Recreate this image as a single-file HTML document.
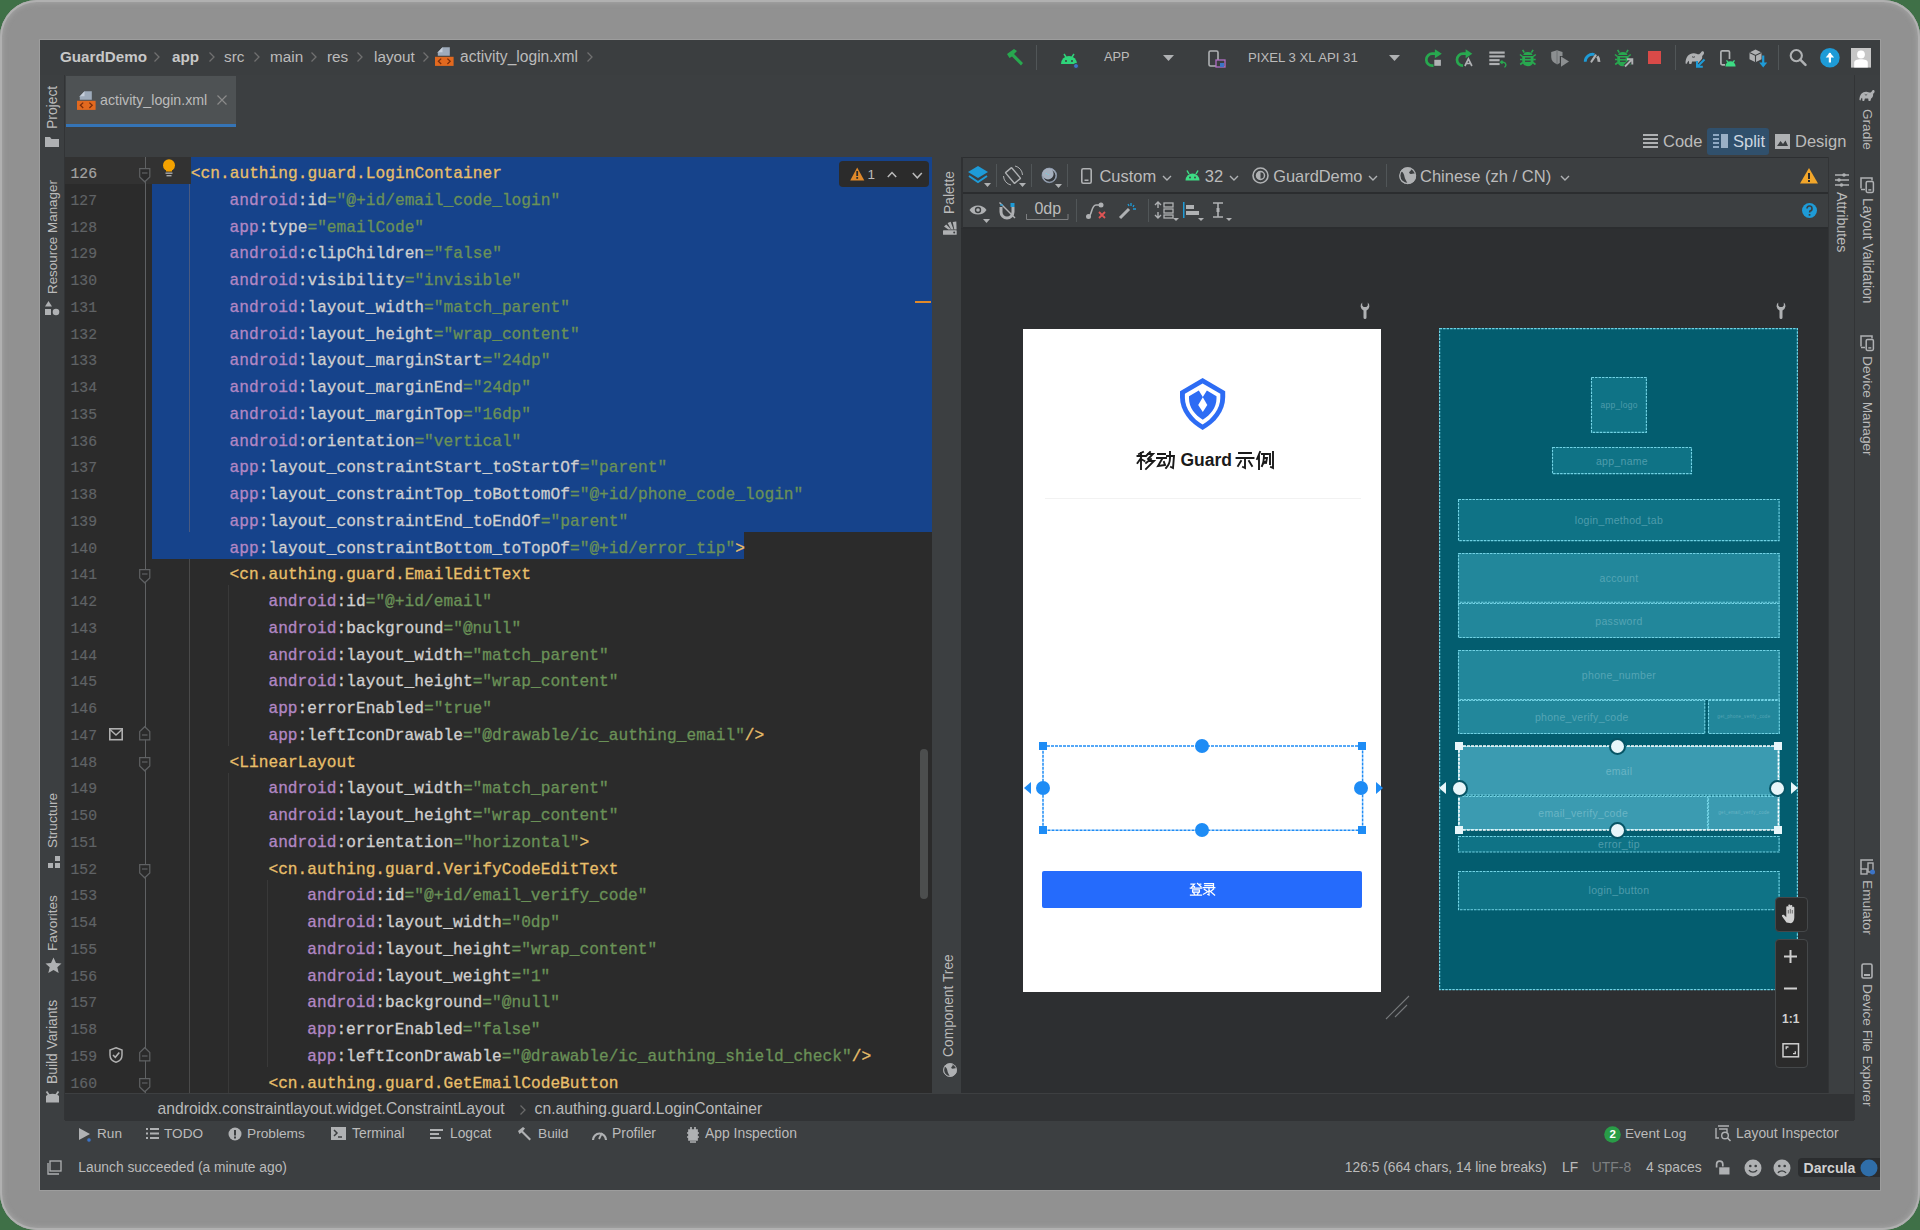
<!DOCTYPE html>
<html><head><meta charset="utf-8"><style>
*{margin:0;padding:0;box-sizing:border-box}
html,body{width:1920px;height:1230px;overflow:hidden;background:#3f7047}
body{position:relative;font-family:"Liberation Sans",sans-serif}
.a{position:absolute}
#frame{position:absolute;left:0;top:0;width:1920px;height:1230px;border-radius:37px;background:#919191;box-shadow:inset 0 0 0 2px #b0b0b0,inset 0 0 5px 3px #a3a3a3}
.ui{position:absolute;color:#bbbbbb;font-size:15px;white-space:nowrap;line-height:1}
.code{position:absolute;font-family:"Liberation Mono",monospace;font-size:16.17px;white-space:pre;color:#a9b7c6;line-height:26.75px;height:26.75px;-webkit-text-stroke:0.3px currentColor;padding-top:3.7px;letter-spacing:0.028px}
.ln{position:absolute;font-family:"Liberation Mono",monospace;font-size:14.7px;color:#606366;text-align:right;line-height:26.75px;height:26.75px;padding-top:3.7px;-webkit-text-stroke:0.2px currentColor}
.t{color:#e8bf6a}.ns{color:#b287c4}.an{color:#cfcfcf}.v{color:#6a9157}
.rl{position:absolute;transform-origin:0 0;white-space:nowrap;color:#bbbbbb;font-size:14px;line-height:1}
svg{position:absolute;overflow:visible}
</style></head><body>
<div id="frame"></div>
<div class="a" style="left:39px;top:39px;width:1842px;height:1152px;background:#9d9d9d;"></div>
<div class="a" style="left:40px;top:40px;width:1840px;height:1150px;background:#3c3f41;"></div>
<div class="a" style="left:40px;top:40px;width:1840px;height:35px;background:#3b3e40;"></div>
<div class="ui" style="left:60px;top:49.47px;font-size:15.2px;color:#c8c8c8;font-weight:bold;">GuardDemo</div>
<svg style="left:153px;top:51px;" width="8" height="12" viewBox="0 0 8 12"><path d="M1.5 1.5 L6 6 L1.5 10.5" fill="none" stroke="#707070" stroke-width="1.3"/></svg>
<div class="ui" style="left:172px;top:49.47px;font-size:15.2px;color:#c8c8c8;font-weight:bold;">app</div>
<svg style="left:208px;top:51px;" width="8" height="12" viewBox="0 0 8 12"><path d="M1.5 1.5 L6 6 L1.5 10.5" fill="none" stroke="#707070" stroke-width="1.3"/></svg>
<div class="ui" style="left:224px;top:49.42px;font-size:15.3px;color:#bbbbbb;font-weight:normal;">src</div>
<svg style="left:253px;top:51px;" width="8" height="12" viewBox="0 0 8 12"><path d="M1.5 1.5 L6 6 L1.5 10.5" fill="none" stroke="#707070" stroke-width="1.3"/></svg>
<div class="ui" style="left:270px;top:49.42px;font-size:15.3px;color:#bbbbbb;font-weight:normal;">main</div>
<svg style="left:310px;top:51px;" width="8" height="12" viewBox="0 0 8 12"><path d="M1.5 1.5 L6 6 L1.5 10.5" fill="none" stroke="#707070" stroke-width="1.3"/></svg>
<div class="ui" style="left:327px;top:49.42px;font-size:15.3px;color:#bbbbbb;font-weight:normal;">res</div>
<svg style="left:356px;top:51px;" width="8" height="12" viewBox="0 0 8 12"><path d="M1.5 1.5 L6 6 L1.5 10.5" fill="none" stroke="#707070" stroke-width="1.3"/></svg>
<div class="ui" style="left:374px;top:49.42px;font-size:15.3px;color:#bbbbbb;font-weight:normal;">layout</div>
<svg style="left:422px;top:51px;" width="8" height="12" viewBox="0 0 8 12"><path d="M1.5 1.5 L6 6 L1.5 10.5" fill="none" stroke="#707070" stroke-width="1.3"/></svg>
<svg style="left:435.3px;top:46.5px;" width="20" height="20" viewBox="0 0 20 20"><path d="M7.5 0.3 L14.8 0.3 L14.8 8.7 L2.8 8.7 L2.8 5.2 Z" fill="#9eabbb"/><path d="M2.8 5.2 L7.5 5.2 L7.5 0.3 Z" fill="#c5ceda"/><rect x="0" y="9.8" width="18.6" height="9.1" fill="#e2691f"/><path d="M6.2 11.6 L3.4 14.3 L6.2 17 M12.4 11.6 L15.2 14.3 L12.4 17" fill="none" stroke="#7a2e0c" stroke-width="1.3"/></svg>
<div class="ui" style="left:460px;top:49.27px;font-size:15.6px;color:#bbbbbb;font-weight:normal;">activity_login.xml</div>
<svg style="left:586px;top:51px;" width="8" height="12" viewBox="0 0 8 12"><path d="M1.5 1.5 L6 6 L1.5 10.5" fill="none" stroke="#707070" stroke-width="1.3"/></svg>
<svg style="left:1005px;top:48px;" width="20" height="20" viewBox="0 0 20 20"><path d="M2 6 L9 1 L12 3 L9 6 L18 15 L16 17.5 L7 8.5 L4.5 10 Z" fill="#28a84f"/></svg>
<div class="a" style="left:1036px;top:45px;width:1px;height:25px;background:#515658;"></div>
<svg style="left:1060px;top:50px;" width="20" height="20" viewBox="0 0 20 20"><path d="M1 14 A8 8 0 0 1 17 14 Z" fill="#2ed47a"/><path d="M4 4 L6 7 M14 4 L12 7" stroke="#2ed47a" stroke-width="1.5"/><circle cx="6" cy="11" r="1" fill="#3c3f41"/><circle cx="12" cy="11" r="1" fill="#3c3f41"/><circle cx="16" cy="16" r="2.5" fill="#3c74c7" stroke="#3b3e40" stroke-width="1"/></svg>
<div class="ui" style="left:1104px;top:51.27px;font-size:12.8px;color:#bbbbbb;font-weight:normal;">APP</div>
<svg style="left:1163px;top:55px;" width="12" height="7" viewBox="0 0 12 7"><path d="M0 0 L11 0 L5.5 6 Z" fill="#afb1b3"/></svg>
<svg style="left:1208px;top:50px;" width="18" height="18" viewBox="0 0 18 18"><rect x="1" y="1" width="9" height="15" rx="1.5" fill="none" stroke="#afb1b3" stroke-width="1.6"/><rect x="8" y="10" width="9" height="7" fill="#3b3e40" stroke="#b26ec6" stroke-width="1.3"/><rect x="12" y="13" width="4" height="4" fill="#3c74c7"/></svg>
<div class="ui" style="left:1248px;top:51.07px;font-size:13.2px;color:#bbbbbb;font-weight:normal;">PIXEL 3 XL API 31</div>
<svg style="left:1389px;top:55px;" width="12" height="7" viewBox="0 0 12 7"><path d="M0 0 L11 0 L5.5 6 Z" fill="#afb1b3"/></svg>
<svg style="left:1425px;top:48px;" width="20" height="20" viewBox="0 0 20 20"><path d="M10.5 5.7 L7.3 5.7 A6 6 0 0 0 7.3 17.7 L8.5 17.7" fill="none" stroke="#28a84f" stroke-width="2.7"/><path d="M9.9 1.2 L16.8 5.7 L9.9 10.3 Z" fill="#28a84f"/><rect x="9.3" y="11.8" width="6.6" height="6" fill="#afb1b3"/></svg>
<svg style="left:1456px;top:48px;" width="20" height="20" viewBox="0 0 20 20"><path d="M10.5 5.7 L7 5.7 A6 6 0 0 0 7 17.7" fill="none" stroke="#28a84f" stroke-width="2.7"/><path d="M9.6 1.2 L16.3 5.7 L9.6 10.3 Z" fill="#28a84f"/><path d="M8.9 18 L12.4 10.9 L15.9 18 M10.3 15.5 L14.5 15.5" fill="none" stroke="#afb1b3" stroke-width="1.7"/></svg>
<svg style="left:1488.5px;top:50.5px;" width="19" height="16" viewBox="0 0 19 16"><rect x="0.3" y="0.5" width="15.4" height="2.2" fill="#afb1b3"/><rect x="0.3" y="4.3" width="15.4" height="2.2" fill="#afb1b3"/><rect x="0.3" y="8.1" width="10.3" height="2.2" fill="#afb1b3"/><rect x="0.3" y="11.9" width="10.3" height="2.2" fill="#afb1b3"/><path d="M13.5 9.6 L11.6 11.2 L13.5 12.8 M11.8 11.2 L14.5 11.2 A2.8 2.8 0 0 1 15.5 16.4" fill="none" stroke="#28a84f" stroke-width="1.4"/></svg>
<svg style="left:1520.3px;top:49.2px;" width="16" height="17" viewBox="0 0 16 17"><path d="M4.3 3.6 L2.6 0.8 M11.4 3.6 L13.1 0.8" stroke="#28a84f" stroke-width="1.6"/><path d="M3.2 6 A4.7 3.5 0 0 1 12.5 6 Z" fill="#28a84f"/><path d="M2.2 7 L13.5 7 L13.5 12 A5.65 5.2 0 0 1 2.2 12 Z" fill="#28a84f"/><path d="M0 5.5 L2.5 7.5 M15.7 5.5 L13.2 7.5 M0 10.5 L2.5 10.5 M15.7 10.5 L13.2 10.5 M0.2 15.5 L2.8 13.5 M15.5 15.5 L12.9 13.5" stroke="#28a84f" stroke-width="1.6"/><rect x="5" y="8.6" width="5.7" height="1.3" fill="#3b3e40"/><rect x="5" y="11.6" width="5.7" height="1.3" fill="#3b3e40"/></svg>
<svg style="left:1551px;top:50px;" width="19" height="17" viewBox="0 0 19 17"><path d="M0.2 2 L6 0.3 L11.5 2 L11.5 6 L8.8 6 L8.8 13 C7.5 13.8 6.5 14.2 6 14.3 C2.5 13 0.2 10.5 0.2 7 Z" fill="#8c8f91"/><path d="M6 0.3 L6 14.3" stroke="#6f7274" stroke-width="1"/><path d="M10 6.5 L18 11.5 L10 16.8 Z" fill="#8c8f91"/></svg>
<svg style="left:1582.5px;top:51px;" width="18" height="12" viewBox="0 0 18 12"><path d="M2.2 10.8 A7.5 7.5 0 0 1 11.5 3.5" fill="none" stroke="#1e9bd7" stroke-width="2.8"/><path d="M14.3 5.4 A7.5 7.5 0 0 1 16 10.8" fill="none" stroke="#afb1b3" stroke-width="2.8"/><path d="M8.5 10.5 L12.6 4.3" stroke="#afb1b3" stroke-width="2.2" stroke-linecap="round"/></svg>
<svg style="left:1615.3px;top:49.2px;" width="19" height="18" viewBox="0 0 19 18"><path d="M4.3 3.6 L2.6 0.8 M11.4 3.6 L13.1 0.8" stroke="#28a84f" stroke-width="1.6"/><path d="M3.2 6 A4.7 3.5 0 0 1 12.5 6 Z" fill="#28a84f"/><path d="M2.2 7 L13.5 7 L13.5 12 A5.65 5.2 0 0 1 2.2 12 Z" fill="#28a84f"/><path d="M0 5.5 L2.5 7.5 M15.7 5.5 L13.2 7.5 M0 10.5 L2.5 10.5 M15.7 10.5 L13.2 10.5 M0.2 15.5 L2.8 13.5 M15.5 15.5 L12.9 13.5" stroke="#28a84f" stroke-width="1.6"/><rect x="5" y="8.6" width="5.7" height="1.3" fill="#3b3e40"/><rect x="5" y="11.6" width="5.7" height="1.3" fill="#3b3e40"/><path d="M10 17.5 L16.8 10.7" stroke="#3b3e40" stroke-width="4"/><path d="M10 17.5 L16.8 10.7 M12 10.3 L17.3 10.3 L17.3 15.6" fill="none" stroke="#afb1b3" stroke-width="1.9"/></svg>
<div class="a" style="left:1648px;top:51px;width:13px;height:12.5px;background:#d94a48;"></div>
<div class="a" style="left:1674.5px;top:45px;width:1.0px;height:25px;background:#515658;"></div>
<svg style="left:1684.5px;top:50px;" width="21" height="18" viewBox="0 0 21 18"><path d="M0.5 13.5 C0.5 6.5 4.5 3 9 3.3 C11 3.5 12.5 4.5 14.2 4.3 L15.8 2.8 C16.3 1 18.5 0.5 19 2.5 C19.3 4 18 5.3 17.2 6 C17.5 8.5 16.5 10.5 14.8 11.5 L13.8 14 L11.7 14 L11.2 11.5 L7.2 11.5 L6.3 14 L4.3 14 L3.8 10.8 C3 11.2 2.2 12.4 2 13.8 Z" fill="#afb1b3"/><path d="M7 6.5 C8 7.5 9 7.5 10 6.5" stroke="#3b3e40" stroke-width="1" fill="none"/><path d="M19.5 9.5 L12.8 16.2" stroke="#3b3e40" stroke-width="4"/><path d="M19.5 9.5 L12.8 16.2 M12 11 L12 16.8 L17.8 16.8" fill="none" stroke="#1e9bd7" stroke-width="2"/></svg>
<svg style="left:1719.5px;top:49.5px;" width="17" height="17" viewBox="0 0 17 17"><path d="M9.5 9 L9.5 2 A1.3 1.3 0 0 0 8.2 0.8 L2.2 0.8 A1.3 1.3 0 0 0 0.9 2 L0.9 13.6 A1.3 1.3 0 0 0 2.2 14.9 L5 14.9" fill="none" stroke="#afb1b3" stroke-width="1.7"/><path d="M5.4 16.4 A5 5 0 0 1 15.6 16.4 Z" fill="#3ddc84"/><path d="M6.5 10.3 L8 12.3 M14.5 10.3 L13 12.3" stroke="#3ddc84" stroke-width="1.3"/></svg>
<svg style="left:1748.5px;top:48.5px;" width="20" height="20" viewBox="0 0 20 20"><path d="M0.5 3.5 L6.5 0.5 L12.5 3.5 L12.5 10.2 L6.5 13.2 L0.5 10.2 Z" fill="#afb1b3"/><path d="M0.5 3.5 L6.5 6.5 L12.5 3.5 M6.5 6.5 L6.5 13.2" stroke="#3b3e40" stroke-width="1.1" fill="none"/><path d="M14.2 6.5 L14.2 17" stroke="#1e9bd7" stroke-width="2.2"/><path d="M10.2 13.5 L14.2 18.5 L18.2 13.5 Z" fill="#1e9bd7"/></svg>
<div class="a" style="left:1778px;top:45px;width:1px;height:25px;background:#515658;"></div>
<svg style="left:1789px;top:48px;" width="19" height="19" viewBox="0 0 19 19"><circle cx="7.3" cy="7.6" r="5.6" fill="none" stroke="#afb1b3" stroke-width="2.1"/><path d="M11.3 11.6 L16.5 16.8" stroke="#afb1b3" stroke-width="2.5" stroke-linecap="round"/></svg>
<svg style="left:1820px;top:47.5px;" width="20" height="20" viewBox="0 0 20 20"><circle cx="9.9" cy="9.8" r="9.8" fill="#1e9bd7"/><path d="M9.9 5 L9.9 14.5" stroke="#fff" stroke-width="2.2"/><path d="M5.7 9.6 L9.9 4.6 L14.1 9.6 Z" fill="#fff"/></svg>
<svg style="left:1851.2px;top:47.5px;" width="20" height="20" viewBox="0 0 20 20"><rect x="0" y="0" width="20" height="19.6" fill="#c6c6c6"/><circle cx="10" cy="6.5" r="3.9" fill="#fff"/><path d="M3.2 19.6 L3.2 14.8 C3.2 12 6 11.2 10 11.2 C14 11.2 16.8 12 16.8 14.8 L16.8 19.6 Z" fill="#fff"/></svg>
<div class="a" style="left:40px;top:75px;width:25px;height:1045px;background:#3c3f41;"></div>
<div class="a" style="left:64px;top:75px;width:1px;height:1045px;background:#323436;"></div>
<div class="rl" style="left:45.82px;top:128.5px;font-size:13.9px;color:#bbbbbb;transform:rotate(-90deg)">Project</div>
<svg style="left:45px;top:136px;" width="15" height="12" viewBox="0 0 15 12"><path d="M0 1 L5 1 L6.5 3 L14 3 L14 11 L0 11 Z" fill="#afb1b3"/></svg>
<div class="rl" style="left:46.07px;top:293.5px;font-size:13.4px;color:#bbbbbb;transform:rotate(-90deg)">Resource Manager</div>
<svg style="left:45px;top:300px;" width="15" height="16" viewBox="0 0 15 16"><path d="M3.5 1 L7 6.5 L0 6.5 Z" fill="#afb1b3"/><rect x="0" y="9" width="6" height="6" fill="#afb1b3"/><circle cx="11" cy="12" r="3.3" fill="#afb1b3"/></svg>
<div class="rl" style="left:45.97px;top:848.4px;font-size:13.6px;color:#bbbbbb;transform:rotate(-90deg)">Structure</div>
<svg style="left:47.5px;top:856px;" width="13" height="13" viewBox="0 0 13 13"><rect x="0" y="7" width="5" height="5" fill="#afb1b3"/><rect x="7" y="7" width="5" height="5" fill="#afb1b3"/><rect x="7" y="0" width="5" height="5" fill="#afb1b3"/></svg>
<div class="rl" style="left:45.97px;top:951px;font-size:13.6px;color:#bbbbbb;transform:rotate(-90deg)">Favorites</div>
<svg style="left:44.5px;top:957px;" width="17" height="17" viewBox="0 0 17 17"><path d="M8.5 0.5 L11 6 L16.5 6.5 L12.3 10.3 L13.7 16 L8.5 13 L3.3 16 L4.7 10.3 L0.5 6.5 L6 6 Z" fill="#afb1b3"/></svg>
<div class="rl" style="left:45.87px;top:1084.4px;font-size:13.8px;color:#bbbbbb;transform:rotate(-90deg)">Build Variants</div>
<svg style="left:45px;top:1091px;" width="15" height="12" viewBox="0 0 15 12"><path d="M1 11.5 L14 11.5 L14 5 C11 2 4 2 1 5 Z" fill="#afb1b3"/><path d="M1.5 0.5 L4 4 M13.5 0.5 L11 4" stroke="#afb1b3" stroke-width="1.8"/></svg>
<div class="a" style="left:1854px;top:75px;width:26px;height:1045px;background:#3c3f41;"></div>
<div class="a" style="left:1854px;top:75px;width:1px;height:1045px;background:#323436;"></div>
<svg style="left:1858.8px;top:88.8px;" width="17" height="13" viewBox="0 0 17 13"><g transform="scale(0.82)"><path d="M0.5 13.5 C0.5 6.5 4.5 3 9 3.3 C11 3.5 12.5 4.5 14.2 4.3 L15.8 2.8 C16.3 1 18.5 0.5 19 2.5 C19.3 4 18 5.3 17.2 6 C17.5 8.5 16.5 10.5 14.8 11.5 L13.8 14.6 L11.7 14.6 L11.2 11.5 L7.2 11.5 L6.3 14.6 L4.3 14.6 L3.8 10.8 C3 11.2 2.2 12.4 2 14 Z" fill="#afb1b3"/><path d="M7 6.5 C8 7.5 9 7.5 10 6.5" stroke="#3c3f41" stroke-width="1" fill="none"/></g></svg>
<div class="rl" style="left:1874.13px;top:109px;font-size:13.6px;color:#bbbbbb;transform:rotate(90deg)">Gradle</div>
<svg style="left:1860.3px;top:176.6px;" width="15" height="17" viewBox="0 0 15 17"><path d="M1 11.5 L1 1 L12 1 L12 3.5" fill="none" stroke="#afb1b3" stroke-width="1.5"/><path d="M1 12.5 L5 12.5" stroke="#afb1b3" stroke-width="1.5"/><rect x="6.2" y="4.4" width="7.2" height="11" rx="1.3" fill="#3c3f41" stroke="#afb1b3" stroke-width="1.5"/><rect x="8.3" y="12.2" width="3" height="1.4" fill="#afb1b3"/></svg>
<div class="rl" style="left:1874.28px;top:197.8px;font-size:13.9px;color:#bbbbbb;transform:rotate(90deg)">Layout Validation</div>
<svg style="left:1860.3px;top:335px;" width="15" height="17" viewBox="0 0 15 17"><path d="M1 11.5 L1 1 L12 1 L12 3.5" fill="none" stroke="#afb1b3" stroke-width="1.5"/><path d="M1 12.5 L5 12.5" stroke="#afb1b3" stroke-width="1.5"/><rect x="6.2" y="4.4" width="7.2" height="11" rx="1.3" fill="#3c3f41" stroke="#afb1b3" stroke-width="1.5"/><rect x="8.3" y="12.2" width="3" height="1.4" fill="#afb1b3"/></svg>
<div class="rl" style="left:1874.18px;top:356px;font-size:13.7px;color:#bbbbbb;transform:rotate(90deg)">Device Manager</div>
<svg style="left:1860px;top:859px;" width="16" height="17" viewBox="0 0 16 17"><path d="M1 10 L1 1 L13 1" fill="none" stroke="#afb1b3" stroke-width="1.5"/><rect x="1" y="10" width="6" height="5" fill="none" stroke="#afb1b3" stroke-width="1.4"/><rect x="8" y="4" width="5" height="9" fill="none" stroke="#afb1b3" stroke-width="1.4"/><circle cx="12.5" cy="13" r="2.5" fill="#3c74c7"/></svg>
<div class="rl" style="left:1874.18px;top:880px;font-size:13.7px;color:#bbbbbb;transform:rotate(90deg)">Emulator</div>
<svg style="left:1861px;top:963px;" width="13" height="16" viewBox="0 0 13 16"><rect x="1" y="1" width="10" height="14" rx="1.5" fill="none" stroke="#afb1b3" stroke-width="1.6"/><rect x="3" y="11" width="6" height="2" fill="#afb1b3"/></svg>
<div class="rl" style="left:1874.18px;top:984px;font-size:13.7px;color:#bbbbbb;transform:rotate(90deg)">Device File Explorer</div>
<div class="a" style="left:65px;top:75px;width:1789px;height:82px;background:#3c3f41;"></div>
<div class="a" style="left:66px;top:75.7px;width:170px;height:48.3px;background:#4e5254;"></div>
<div class="a" style="left:66px;top:123.9px;width:170px;height:3.0999999999999943px;background:#3574b6;"></div>
<svg style="left:76.6px;top:91px;" width="20" height="20" viewBox="0 0 20 20"><path d="M7.5 0.3 L14.8 0.3 L14.8 8.7 L2.8 8.7 L2.8 5.2 Z" fill="#9eabbb"/><path d="M2.8 5.2 L7.5 5.2 L7.5 0.3 Z" fill="#c5ceda"/><rect x="0" y="9.8" width="18.6" height="9.1" fill="#e2691f"/><path d="M6.2 11.6 L3.4 14.3 L6.2 17 M12.4 11.6 L15.2 14.3 L12.4 17" fill="none" stroke="#7a2e0c" stroke-width="1.3"/></svg>
<div class="ui" style="left:100px;top:93.27px;font-size:14.2px;color:#bbbbbb;font-weight:normal;">activity_login.xml</div>
<svg style="left:217px;top:95px;" width="10" height="10" viewBox="0 0 10 10"><path d="M0.5 0.5 L9.5 9.5 M9.5 0.5 L0.5 9.5" stroke="#8a8a8a" stroke-width="1.2"/></svg>
<svg style="left:1643px;top:134px;" width="15" height="14" viewBox="0 0 15 14"><rect x="0" y="0" width="15" height="2" fill="#afb1b3"/><rect x="0" y="4" width="15" height="2" fill="#afb1b3"/><rect x="0" y="8" width="15" height="2" fill="#afb1b3"/><rect x="0" y="12" width="15" height="2" fill="#afb1b3"/></svg>
<div class="ui" style="left:1663px;top:133.42px;font-size:16.5px;color:#bbbbbb;font-weight:normal;">Code</div>
<div class="a" style="left:1707px;top:128px;width:62px;height:27px;background:#30506c;border-radius:3px"></div>
<svg style="left:1713px;top:134px;" width="15" height="14" viewBox="0 0 15 14"><rect x="0" y="0" width="6" height="2" fill="#8fa9c3"/><rect x="0" y="4" width="6" height="2" fill="#8fa9c3"/><rect x="0" y="8" width="6" height="2" fill="#8fa9c3"/><rect x="0" y="12" width="6" height="2" fill="#8fa9c3"/><rect x="8" y="0" width="7" height="14" fill="#9ab0c6"/></svg>
<div class="ui" style="left:1733px;top:133.42px;font-size:16.5px;color:#cdd7e0;font-weight:normal;">Split</div>
<svg style="left:1775px;top:134px;" width="15" height="15" viewBox="0 0 15 15"><rect x="0" y="0" width="15" height="15" fill="#afb1b3"/><path d="M2 12 L5.5 7 L8 10 L10.5 6.5 L13 12 Z" fill="#3c3f41"/></svg>
<div class="ui" style="left:1795px;top:133.42px;font-size:16.5px;color:#bbbbbb;font-weight:normal;">Design</div>
<div class="a" style="left:65px;top:157px;width:867px;height:936.2px;background:#2b2b2b;"></div>
<div class="a" style="left:65px;top:157px;width:867px;height:1px;background:#323232;"></div>
<div class="a" style="left:65px;top:157.4px;width:126.5px;height:26.75px;background:#323232;"></div>
<div class="a" style="left:190.808px;top:157.4px;width:741.192px;height:26.75px;background:#16438b;"></div>
<div class="a" style="left:152px;top:184.15px;width:780px;height:347.75px;background:#16438b;"></div>
<div class="a" style="left:152px;top:531.9px;width:591.822px;height:26.75px;background:#16438b;"></div>
<div class="a" style="left:189px;top:184.15px;width:1px;height:347.75px;background:#4a5a80;"></div>
<div class="a" style="left:189px;top:558.65px;width:1px;height:534.5500000000001px;background:#4a4a4a;"></div>
<div class="a" style="left:228px;top:585.4px;width:1px;height:160.5px;background:#393939;"></div>
<div class="a" style="left:228px;top:772.65px;width:1px;height:320.55000000000007px;background:#393939;"></div>
<div class="a" style="left:267px;top:879.65px;width:1px;height:187.2500000000001px;background:#393939;"></div>
<div class="ln" style="left:56px;top:157.40px;width:41px;color:#a4a3a3">126</div>
<div class="code" style="left:190.81px;top:157.40px"><span class="t">&lt;cn.authing.guard.LoginContainer</span></div>
<div class="ln" style="left:56px;top:184.15px;width:41px;color:#606366">127</div>
<div class="code" style="left:229.62px;top:184.15px"><span class="ns">android</span><span class="an">:id</span><span class="v">=&quot;@+id/email_code_login&quot;</span></div>
<div class="ln" style="left:56px;top:210.90px;width:41px;color:#606366">128</div>
<div class="code" style="left:229.62px;top:210.90px"><span class="ns">app</span><span class="an">:type</span><span class="v">=&quot;emailCode&quot;</span></div>
<div class="ln" style="left:56px;top:237.65px;width:41px;color:#606366">129</div>
<div class="code" style="left:229.62px;top:237.65px"><span class="ns">android</span><span class="an">:clipChildren</span><span class="v">=&quot;false&quot;</span></div>
<div class="ln" style="left:56px;top:264.40px;width:41px;color:#606366">130</div>
<div class="code" style="left:229.62px;top:264.40px"><span class="ns">android</span><span class="an">:visibility</span><span class="v">=&quot;invisible&quot;</span></div>
<div class="ln" style="left:56px;top:291.15px;width:41px;color:#606366">131</div>
<div class="code" style="left:229.62px;top:291.15px"><span class="ns">android</span><span class="an">:layout_width</span><span class="v">=&quot;match_parent&quot;</span></div>
<div class="ln" style="left:56px;top:317.90px;width:41px;color:#606366">132</div>
<div class="code" style="left:229.62px;top:317.90px"><span class="ns">android</span><span class="an">:layout_height</span><span class="v">=&quot;wrap_content&quot;</span></div>
<div class="ln" style="left:56px;top:344.65px;width:41px;color:#606366">133</div>
<div class="code" style="left:229.62px;top:344.65px"><span class="ns">android</span><span class="an">:layout_marginStart</span><span class="v">=&quot;24dp&quot;</span></div>
<div class="ln" style="left:56px;top:371.40px;width:41px;color:#606366">134</div>
<div class="code" style="left:229.62px;top:371.40px"><span class="ns">android</span><span class="an">:layout_marginEnd</span><span class="v">=&quot;24dp&quot;</span></div>
<div class="ln" style="left:56px;top:398.15px;width:41px;color:#606366">135</div>
<div class="code" style="left:229.62px;top:398.15px"><span class="ns">android</span><span class="an">:layout_marginTop</span><span class="v">=&quot;16dp&quot;</span></div>
<div class="ln" style="left:56px;top:424.90px;width:41px;color:#606366">136</div>
<div class="code" style="left:229.62px;top:424.90px"><span class="ns">android</span><span class="an">:orientation</span><span class="v">=&quot;vertical&quot;</span></div>
<div class="ln" style="left:56px;top:451.65px;width:41px;color:#606366">137</div>
<div class="code" style="left:229.62px;top:451.65px"><span class="ns">app</span><span class="an">:layout_constraintStart_toStartOf</span><span class="v">=&quot;parent&quot;</span></div>
<div class="ln" style="left:56px;top:478.40px;width:41px;color:#606366">138</div>
<div class="code" style="left:229.62px;top:478.40px"><span class="ns">app</span><span class="an">:layout_constraintTop_toBottomOf</span><span class="v">=&quot;@+id/phone_code_login&quot;</span></div>
<div class="ln" style="left:56px;top:505.15px;width:41px;color:#606366">139</div>
<div class="code" style="left:229.62px;top:505.15px"><span class="ns">app</span><span class="an">:layout_constraintEnd_toEndOf</span><span class="v">=&quot;parent&quot;</span></div>
<div class="ln" style="left:56px;top:531.90px;width:41px;color:#606366">140</div>
<div class="code" style="left:229.62px;top:531.90px"><span class="ns">app</span><span class="an">:layout_constraintBottom_toTopOf</span><span class="v">=&quot;@+id/error_tip&quot;</span><span class="t">&gt;</span></div>
<div class="ln" style="left:56px;top:558.65px;width:41px;color:#606366">141</div>
<div class="code" style="left:229.62px;top:558.65px"><span class="t">&lt;cn.authing.guard.EmailEditText</span></div>
<div class="ln" style="left:56px;top:585.40px;width:41px;color:#606366">142</div>
<div class="code" style="left:268.42px;top:585.40px"><span class="ns">android</span><span class="an">:id</span><span class="v">=&quot;@+id/email&quot;</span></div>
<div class="ln" style="left:56px;top:612.15px;width:41px;color:#606366">143</div>
<div class="code" style="left:268.42px;top:612.15px"><span class="ns">android</span><span class="an">:background</span><span class="v">=&quot;@null&quot;</span></div>
<div class="ln" style="left:56px;top:638.90px;width:41px;color:#606366">144</div>
<div class="code" style="left:268.42px;top:638.90px"><span class="ns">android</span><span class="an">:layout_width</span><span class="v">=&quot;match_parent&quot;</span></div>
<div class="ln" style="left:56px;top:665.65px;width:41px;color:#606366">145</div>
<div class="code" style="left:268.42px;top:665.65px"><span class="ns">android</span><span class="an">:layout_height</span><span class="v">=&quot;wrap_content&quot;</span></div>
<div class="ln" style="left:56px;top:692.40px;width:41px;color:#606366">146</div>
<div class="code" style="left:268.42px;top:692.40px"><span class="ns">app</span><span class="an">:errorEnabled</span><span class="v">=&quot;true&quot;</span></div>
<div class="ln" style="left:56px;top:719.15px;width:41px;color:#606366">147</div>
<div class="code" style="left:268.42px;top:719.15px"><span class="ns">app</span><span class="an">:leftIconDrawable</span><span class="v">=&quot;@drawable/ic_authing_email&quot;</span><span class="t">/&gt;</span></div>
<div class="ln" style="left:56px;top:745.90px;width:41px;color:#606366">148</div>
<div class="code" style="left:229.62px;top:745.90px"><span class="t">&lt;LinearLayout</span></div>
<div class="ln" style="left:56px;top:772.65px;width:41px;color:#606366">149</div>
<div class="code" style="left:268.42px;top:772.65px"><span class="ns">android</span><span class="an">:layout_width</span><span class="v">=&quot;match_parent&quot;</span></div>
<div class="ln" style="left:56px;top:799.40px;width:41px;color:#606366">150</div>
<div class="code" style="left:268.42px;top:799.40px"><span class="ns">android</span><span class="an">:layout_height</span><span class="v">=&quot;wrap_content&quot;</span></div>
<div class="ln" style="left:56px;top:826.15px;width:41px;color:#606366">151</div>
<div class="code" style="left:268.42px;top:826.15px"><span class="ns">android</span><span class="an">:orientation</span><span class="v">=&quot;horizontal&quot;</span><span class="t">&gt;</span></div>
<div class="ln" style="left:56px;top:852.90px;width:41px;color:#606366">152</div>
<div class="code" style="left:268.42px;top:852.90px"><span class="t">&lt;cn.authing.guard.VerifyCodeEditText</span></div>
<div class="ln" style="left:56px;top:879.65px;width:41px;color:#606366">153</div>
<div class="code" style="left:307.23px;top:879.65px"><span class="ns">android</span><span class="an">:id</span><span class="v">=&quot;@+id/email_verify_code&quot;</span></div>
<div class="ln" style="left:56px;top:906.40px;width:41px;color:#606366">154</div>
<div class="code" style="left:307.23px;top:906.40px"><span class="ns">android</span><span class="an">:layout_width</span><span class="v">=&quot;0dp&quot;</span></div>
<div class="ln" style="left:56px;top:933.15px;width:41px;color:#606366">155</div>
<div class="code" style="left:307.23px;top:933.15px"><span class="ns">android</span><span class="an">:layout_height</span><span class="v">=&quot;wrap_content&quot;</span></div>
<div class="ln" style="left:56px;top:959.90px;width:41px;color:#606366">156</div>
<div class="code" style="left:307.23px;top:959.90px"><span class="ns">android</span><span class="an">:layout_weight</span><span class="v">=&quot;1&quot;</span></div>
<div class="ln" style="left:56px;top:986.65px;width:41px;color:#606366">157</div>
<div class="code" style="left:307.23px;top:986.65px"><span class="ns">android</span><span class="an">:background</span><span class="v">=&quot;@null&quot;</span></div>
<div class="ln" style="left:56px;top:1013.40px;width:41px;color:#606366">158</div>
<div class="code" style="left:307.23px;top:1013.40px"><span class="ns">app</span><span class="an">:errorEnabled</span><span class="v">=&quot;false&quot;</span></div>
<div class="ln" style="left:56px;top:1040.15px;width:41px;color:#606366">159</div>
<div class="code" style="left:307.23px;top:1040.15px"><span class="ns">app</span><span class="an">:leftIconDrawable</span><span class="v">=&quot;@drawable/ic_authing_shield_check&quot;</span><span class="t">/&gt;</span></div>
<div class="ln" style="left:56px;top:1066.90px;width:41px;color:#606366">160</div>
<div class="code" style="left:268.42px;top:1066.90px"><span class="t">&lt;cn.authing.guard.GetEmailCodeButton</span></div>
<div class="a" style="left:144.5px;top:157.4px;width:1.0999999999999943px;height:935.8000000000001px;background:#5f6163;"></div>
<svg style="left:139px;top:168.1px;" width="12" height="15" viewBox="0 0 12 15"><path d="M0.7 0.7 L10.8 0.7 L10.8 9 L5.75 13.8 L0.7 9 Z" fill="#2b2b2b" stroke="#5f6163" stroke-width="1.2"/><path d="M3 5 L8.5 5" stroke="#5f6163" stroke-width="1.2"/></svg>
<svg style="left:139px;top:569.35px;" width="12" height="15" viewBox="0 0 12 15"><path d="M0.7 0.7 L10.8 0.7 L10.8 9 L5.75 13.8 L0.7 9 Z" fill="#2b2b2b" stroke="#5f6163" stroke-width="1.2"/><path d="M3 5 L8.5 5" stroke="#5f6163" stroke-width="1.2"/></svg>
<svg style="left:139px;top:725.9499999999999px;" width="12" height="15" viewBox="0 0 12 15"><path d="M0.7 13.8 L10.8 13.8 L10.8 5.5 L5.75 0.7 L0.7 5.5 Z" fill="#2b2b2b" stroke="#5f6163" stroke-width="1.2"/><path d="M3 9 L8.5 9" stroke="#5f6163" stroke-width="1.2"/></svg>
<svg style="left:139px;top:756.6px;" width="12" height="15" viewBox="0 0 12 15"><path d="M0.7 0.7 L10.8 0.7 L10.8 9 L5.75 13.8 L0.7 9 Z" fill="#2b2b2b" stroke="#5f6163" stroke-width="1.2"/><path d="M3 5 L8.5 5" stroke="#5f6163" stroke-width="1.2"/></svg>
<svg style="left:139px;top:863.6px;" width="12" height="15" viewBox="0 0 12 15"><path d="M0.7 0.7 L10.8 0.7 L10.8 9 L5.75 13.8 L0.7 9 Z" fill="#2b2b2b" stroke="#5f6163" stroke-width="1.2"/><path d="M3 5 L8.5 5" stroke="#5f6163" stroke-width="1.2"/></svg>
<svg style="left:139px;top:1046.95px;" width="12" height="15" viewBox="0 0 12 15"><path d="M0.7 13.8 L10.8 13.8 L10.8 5.5 L5.75 0.7 L0.7 5.5 Z" fill="#2b2b2b" stroke="#5f6163" stroke-width="1.2"/><path d="M3 9 L8.5 9" stroke="#5f6163" stroke-width="1.2"/></svg>
<svg style="left:139px;top:1077.6000000000001px;" width="12" height="15" viewBox="0 0 12 15"><path d="M0.7 0.7 L10.8 0.7 L10.8 9 L5.75 13.8 L0.7 9 Z" fill="#2b2b2b" stroke="#5f6163" stroke-width="1.2"/><path d="M3 5 L8.5 5" stroke="#5f6163" stroke-width="1.2"/></svg>
<svg style="left:162px;top:159px;" width="14" height="18" viewBox="0 0 14 18"><circle cx="7" cy="6.2" r="6" fill="#f4a200"/><rect x="4" y="10" width="6" height="2.5" fill="#f4a200"/><rect x="3.5" y="13.5" width="7" height="1.4" fill="#a9a9a9"/><rect x="4.5" y="16" width="5" height="1.4" fill="#a9a9a9"/></svg>
<svg style="left:109px;top:727.5px;" width="14" height="12.5" viewBox="0 0 14 12.5"><rect x="0.8" y="0.8" width="12.4" height="10.9" fill="none" stroke="#b0b0b0" stroke-width="1.6"/><path d="M1 1.5 L7 7 L13 1.5" fill="none" stroke="#b0b0b0" stroke-width="1.5"/></svg>
<svg style="left:109px;top:1047px;" width="14" height="16" viewBox="0 0 14 16"><path d="M7 0.8 L13 3 L13 8 C13 12 10 14.5 7 15.2 C4 14.5 1 12 1 8 L1 3 Z" fill="none" stroke="#b0b0b0" stroke-width="1.5"/><path d="M4 8 L6.3 10.3 L10.3 5.5" fill="none" stroke="#b0b0b0" stroke-width="1.6"/></svg>
<div class="a" style="left:838.7px;top:161px;width:90.6px;height:26.2px;background:#2b2b2b;border-radius:4px"></div>
<svg style="left:849.5px;top:167px;" width="15" height="14" viewBox="0 0 15 14"><path d="M7.2 0.5 L14.3 13.5 L0.2 13.5 Z" fill="#e0892a"/><rect x="6.3" y="4" width="1.8" height="5" fill="#2b2b2b"/><rect x="6.3" y="10" width="1.8" height="1.8" fill="#2b2b2b"/></svg>
<div class="ui" style="left:867.5px;top:167.72px;font-size:13.5px;color:#bbbbbb;font-weight:normal;">1</div>
<svg style="left:887px;top:170.5px;" width="10" height="7" viewBox="0 0 10 7"><path d="M0.8 6 L5 1.5 L9.2 6" fill="none" stroke="#bbbbbb" stroke-width="1.5"/></svg>
<svg style="left:912px;top:171.5px;" width="11" height="7" viewBox="0 0 11 7"><path d="M0.8 1 L5.3 5.8 L9.8 1" fill="none" stroke="#bbbbbb" stroke-width="1.5"/></svg>
<div class="a" style="left:915.2px;top:300.5px;width:15.799999999999955px;height:2.8000000000000114px;background:#e0892a;"></div>
<div class="a" style="left:919.8px;top:749.3px;width:8.5px;height:149.6px;background:#4c4e4e;border-radius:4.5px"></div>
<div class="a" style="left:932px;top:157px;width:29px;height:936.2px;background:#3c3f41;"></div>
<div class="rl" style="left:942.97px;top:214.4px;font-size:13.8px;color:#bbbbbb;transform:rotate(-90deg)">Palette</div>
<svg style="left:942.7px;top:221px;" width="14" height="14" viewBox="0 0 14 14"><path d="M1 5.5 L3.2 3.6 L8.2 8.4 L5.3 8.4 Z M4.6 2 L7.6 0.7 L10.6 8.4 L8.3 8.4 Z M9.7 1 L13.3 0.4 L13.6 8.4 L11.3 8.4 Z" fill="#afb1b3"/><rect x="0" y="9.2" width="13.7" height="4.6" rx="0.6" fill="#afb1b3"/><circle cx="11.2" cy="11.5" r="1" fill="#3c3f41"/></svg>
<div class="rl" style="left:942.27px;top:1056.5px;font-size:13.8px;color:#bbbbbb;transform:rotate(-90deg)">Component Tree</div>
<svg style="left:942.8px;top:1062.7px;" width="18" height="18" viewBox="0 0 18 18"><g transform="scale(0.81)"><circle cx="8.7" cy="8.7" r="8.4" fill="#afb1b3"/><path d="M2.2 4.2 C4.5 5.5 5.2 7.5 5.5 9.8 C5.8 12 7.2 13.5 8.6 16.8 C4.5 16 1.2 12.8 0.9 8.4 C0.9 6.8 1.4 5.3 2.2 4.2 Z" fill="#3c3f41"/><path d="M11.5 1 C12.5 2.5 12 4 10.5 4.8 C9.5 5.5 10.5 7 12 7 C13.5 7 14.5 6 16.6 6.8 C16.2 4.2 14.2 1.8 11.5 1 Z" fill="#3c3f41"/><circle cx="8.7" cy="8.7" r="7.9" fill="none" stroke="#afb1b3" stroke-width="1.2"/></g></svg>
<div class="a" style="left:961px;top:157px;width:867px;height:936.2px;background:#2d2f31;"></div>
<div class="a" style="left:961px;top:157.5px;width:867px;height:35.0px;background:#3c3f41;"></div>
<div class="a" style="left:961px;top:192px;width:867px;height:2px;background:#2b2d2f;"></div>
<div class="a" style="left:961px;top:193.5px;width:867px;height:34.0px;background:#3c3f41;"></div>
<div class="a" style="left:961px;top:227px;width:867px;height:1.5px;background:#2b2d2f;"></div>
<div class="a" style="left:961px;top:157px;width:2px;height:71px;background:#2f3133;"></div>
<svg style="left:968px;top:166px;" width="21" height="20" viewBox="0 0 21 20"><path d="M10 0 L20 6 L10 12 L0 6 Z" fill="#1e9bd7"/><path d="M1 10 L10 16 L19 10" fill="none" stroke="#1e9bd7" stroke-width="2"/></svg>
<svg style="left:984px;top:183px;" width="7" height="5" viewBox="0 0 7 5"><path d="M0 0 L7 0 L3.5 4 Z" fill="#afb1b3"/></svg>
<div class="a" style="left:995.5px;top:164px;width:1.0px;height:23px;background:#515658;"></div>
<svg style="left:1003px;top:165px;" width="20" height="21" viewBox="0 0 20 21"><rect x="6" y="3.5" width="8" height="14" rx="0.5" transform="rotate(-40 10 10.5)" fill="none" stroke="#afb1b3" stroke-width="1.4"/><path d="M12 1 A9.5 9.5 0 0 1 19.5 10" fill="none" stroke="#afb1b3" stroke-width="1"/><path d="M8 20 A9.5 9.5 0 0 1 0.5 11" fill="none" stroke="#afb1b3" stroke-width="1"/></svg>
<svg style="left:1019px;top:183px;" width="7" height="5" viewBox="0 0 7 5"><path d="M0 0 L7 0 L3.5 4 Z" fill="#afb1b3"/></svg>
<div class="a" style="left:1031px;top:164px;width:1px;height:23px;background:#515658;"></div>
<svg style="left:1040.5px;top:167px;" width="17" height="17" viewBox="0 0 17 17"><circle cx="8.3" cy="8.4" r="7.3" fill="#a5afbd" stroke="#8d9bb0" stroke-width="0.8"/><circle cx="8.5" cy="8.8" r="6" fill="#33363a"/><circle cx="7" cy="6.9" r="5.6" fill="#a5afbd"/><circle cx="5.3" cy="6.5" r="0.6" fill="#6fd0e0"/><circle cx="7.3" cy="7.5" r="0.6" fill="#6fd0e0"/></svg>
<svg style="left:1055px;top:184px;" width="7" height="5" viewBox="0 0 7 5"><path d="M0 0 L7 0 L3.5 4 Z" fill="#afb1b3"/></svg>
<div class="a" style="left:1066.5px;top:164px;width:1.0px;height:23px;background:#515658;"></div>
<svg style="left:1081px;top:168px;" width="11" height="16" viewBox="0 0 11 16"><rect x="0.8" y="0.8" width="9.4" height="14.4" rx="1.5" fill="none" stroke="#afb1b3" stroke-width="1.6"/><rect x="3.5" y="11.5" width="4" height="1.5" fill="#afb1b3"/></svg>
<div class="ui" style="left:1099.4px;top:167.72px;font-size:16.5px;color:#bbbbbb;font-weight:normal;">Custom</div>
<svg style="left:1162px;top:175px;" width="10" height="6" viewBox="0 0 10 6"><path d="M1 1 L5 5 L9 1" fill="none" stroke="#afb1b3" stroke-width="1.4"/></svg>
<svg style="left:1185px;top:170px;" width="15" height="11" viewBox="0 0 15 11"><path d="M0.5 10.5 A7 7 0 0 1 14.5 10.5 Z" fill="#3ddc84"/><path d="M2 0.5 L4 4 M13 0.5 L11 4" stroke="#3ddc84" stroke-width="1.5"/><circle cx="5" cy="7.5" r="0.9" fill="#3c3f41"/><circle cx="10" cy="7.5" r="0.9" fill="#3c3f41"/></svg>
<div class="ui" style="left:1204.8px;top:167.72px;font-size:16.5px;color:#bbbbbb;font-weight:normal;">32</div>
<svg style="left:1229px;top:175px;" width="10" height="6" viewBox="0 0 10 6"><path d="M1 1 L5 5 L9 1" fill="none" stroke="#afb1b3" stroke-width="1.4"/></svg>
<svg style="left:1252px;top:167px;" width="17" height="17" viewBox="0 0 17 17"><circle cx="8.5" cy="8.5" r="7.5" fill="none" stroke="#afb1b3" stroke-width="1.6"/><circle cx="8.5" cy="8.5" r="4" fill="none" stroke="#afb1b3" stroke-width="1.5"/><path d="M8.5 4.5 A4 4 0 0 0 8.5 12.5 Z" fill="#afb1b3"/></svg>
<div class="ui" style="left:1273.2px;top:167.77px;font-size:16.4px;color:#bbbbbb;font-weight:normal;">GuardDemo</div>
<svg style="left:1368px;top:175px;" width="10" height="6" viewBox="0 0 10 6"><path d="M1 1 L5 5 L9 1" fill="none" stroke="#afb1b3" stroke-width="1.4"/></svg>
<div class="a" style="left:1386px;top:164px;width:1px;height:23px;background:#515658;"></div>
<svg style="left:1398.9px;top:166.7px;" width="18" height="18" viewBox="0 0 18 18"><circle cx="8.7" cy="8.7" r="8.4" fill="#afb1b3"/><path d="M2.2 4.2 C4.5 5.5 5.2 7.5 5.5 9.8 C5.8 12 7.2 13.5 8.6 16.8 C4.5 16 1.2 12.8 0.9 8.4 C0.9 6.8 1.4 5.3 2.2 4.2 Z" fill="#3c3f41"/><path d="M11.5 1 C12.5 2.5 12 4 10.5 4.8 C9.5 5.5 10.5 7 12 7 C13.5 7 14.5 6 16.6 6.8 C16.2 4.2 14.2 1.8 11.5 1 Z" fill="#3c3f41"/><circle cx="8.7" cy="8.7" r="7.9" fill="none" stroke="#afb1b3" stroke-width="1.2"/></svg>
<div class="ui" style="left:1420px;top:167.72px;font-size:16.5px;color:#bbbbbb;font-weight:normal;">Chinese (zh / CN)</div>
<svg style="left:1560px;top:175px;" width="10" height="6" viewBox="0 0 10 6"><path d="M1 1 L5 5 L9 1" fill="none" stroke="#afb1b3" stroke-width="1.4"/></svg>
<svg style="left:1800px;top:168px;" width="18" height="16" viewBox="0 0 18 16"><path d="M9 0 L18 15.5 L0 15.5 Z" fill="#f2a62a"/><rect x="8" y="5" width="2" height="6" fill="#2b2b2b"/><rect x="8" y="12" width="2" height="2" fill="#2b2b2b"/></svg>
<svg style="left:969px;top:204px;" width="18" height="12" viewBox="0 0 18 12"><path d="M0.5 6 C4 0 14 0 17.5 6 C14 12 4 12 0.5 6Z" fill="#afb1b3"/><circle cx="9" cy="6" r="3.2" fill="#3c3f41"/><circle cx="9" cy="6" r="1.8" fill="#afb1b3"/></svg>
<svg style="left:983px;top:219px;" width="7" height="5" viewBox="0 0 7 5"><path d="M0 0 L7 0 L3.5 4 Z" fill="#afb1b3"/></svg>
<svg style="left:999px;top:202px;" width="17" height="17" viewBox="0 0 17 17"><path d="M2 5 L2 10 A6 6 0 0 0 14 10 L14 5" fill="none" stroke="#afb1b3" stroke-width="3"/><rect x="11.5" y="1" width="4" height="4" fill="#1e9bd7"/><path d="M0.5 0.5 L16 16" stroke="#afb1b3" stroke-width="1.4"/><path d="M1 3 L4 3" stroke="#1e9bd7" stroke-width="1.2"/></svg>
<div class="ui" style="left:1034.4px;top:201.47px;font-size:16px;color:#bbbbbb;font-weight:normal;">0dp</div>
<svg style="left:1026px;top:214px;" width="43" height="8" viewBox="0 0 43 8"><path d="M0.5 0 L0.5 5.5 L42 5.5 L42 0" fill="none" stroke="#7c7e80" stroke-width="1"/></svg>
<div class="a" style="left:1076px;top:199px;width:1px;height:23px;background:#515658;"></div>
<svg style="left:1086px;top:202px;" width="21" height="17" viewBox="0 0 21 17"><path d="M2 15 C6 15 5 3 10 3 L15 3" fill="none" stroke="#afb1b3" stroke-width="1.6"/><circle cx="2.5" cy="14.5" r="2.5" fill="#afb1b3"/><circle cx="15" cy="3" r="2.5" fill="#afb1b3"/><path d="M13 10 L19 16 M19 10 L13 16" stroke="#e05555" stroke-width="1.8"/></svg>
<svg style="left:1119px;top:202px;" width="18" height="17" viewBox="0 0 18 17"><path d="M1 16 L10 7" stroke="#afb1b3" stroke-width="3"/><path d="M12 1 L12 4 M15 3 L14 5 M17 7 L14 7 M9 2 L10 4" stroke="#1e9bd7" stroke-width="1.3"/></svg>
<div class="a" style="left:1147.5px;top:199px;width:1.0px;height:23px;background:#515658;"></div>
<svg style="left:1155px;top:202px;" width="24" height="19" viewBox="0 0 24 19"><path d="M3 0 L3 6 M0 3 L3 0 L6 3 M3 10 L3 16 M0 13 L3 16 L6 13" stroke="#afb1b3" stroke-width="1.4" fill="none"/><rect x="9" y="1" width="9" height="4" fill="none" stroke="#afb1b3" stroke-width="1.3"/><rect x="9" y="7" width="9" height="4" fill="none" stroke="#afb1b3" stroke-width="1.3"/><rect x="9" y="13" width="9" height="3" fill="none" stroke="#afb1b3" stroke-width="1.3"/><path d="M18 16 L24 16 L21 19Z" fill="#afb1b3"/></svg>
<svg style="left:1183px;top:202px;" width="22" height="19" viewBox="0 0 22 19"><rect x="0" y="0" width="1.5" height="16" fill="#1e9bd7"/><rect x="3" y="3" width="8" height="4" fill="#afb1b3"/><rect x="3" y="9" width="13" height="4" fill="#afb1b3"/><path d="M15 16 L21 16 L18 19Z" fill="#afb1b3"/></svg>
<svg style="left:1213px;top:202px;" width="20" height="19" viewBox="0 0 20 19"><path d="M0 1 L10 1 M5 1 L5 15 M0 15 L10 15" stroke="#afb1b3" stroke-width="1.6"/><rect x="3.5" y="6" width="3" height="4" fill="#afb1b3"/><path d="M13 16 L19 16 L16 19Z" fill="#afb1b3"/></svg>
<svg style="left:1802px;top:203px;" width="15" height="15" viewBox="0 0 15 15"><circle cx="7.5" cy="7.5" r="7.5" fill="#1e9bd7"/><path d="M5 5.5 A2.5 2.5 0 1 1 8 8 L7.5 9.5" stroke="#3c3f41" stroke-width="1.6" fill="none"/><rect x="6.7" y="11" width="1.7" height="1.7" fill="#3c3f41"/></svg>
<div class="a" style="left:1828px;top:157px;width:26px;height:936.2px;background:#3c3f41;"></div>
<div class="a" style="left:1828px;top:157px;width:1px;height:936.2px;background:#323436;"></div>
<svg style="left:1835px;top:173px;" width="14" height="14" viewBox="0 0 14 14"><path d="M0 2 L14 2 M0 7 L14 7 M0 12 L14 12" stroke="#afb1b3" stroke-width="1.3"/><circle cx="9" cy="2" r="1.8" fill="#afb1b3"/><circle cx="4" cy="7" r="1.8" fill="#afb1b3"/><circle cx="6.5" cy="12" r="1.8" fill="#afb1b3"/></svg>
<div class="rl" style="left:1848.88px;top:192.4px;font-size:14.3px;color:#bbbbbb;transform:rotate(90deg)">Attributes</div>
<div class="a" style="left:1023px;top:328.7px;width:358px;height:663.5999999999999px;background:#ffffff;"></div>
<svg style="left:1360px;top:302px;" width="10" height="17" viewBox="0 0 10 17"><path d="M2.2 0.5 L2.2 3.5 L3.6 5 L6.4 5 L7.8 3.5 L7.8 0.5 A4.8 4.8 0 0 1 6.5 8.5 L6.5 15.5 A1.5 1.5 0 0 1 3.5 15.5 L3.5 8.5 A4.8 4.8 0 0 1 2.2 0.5 Z" fill="#afb1b3"/></svg>
<svg style="left:1776px;top:302px;" width="10" height="17" viewBox="0 0 10 17"><path d="M2.2 0.5 L2.2 3.5 L3.6 5 L6.4 5 L7.8 3.5 L7.8 0.5 A4.8 4.8 0 0 1 6.5 8.5 L6.5 15.5 A1.5 1.5 0 0 1 3.5 15.5 L3.5 8.5 A4.8 4.8 0 0 1 2.2 0.5 Z" fill="#afb1b3"/></svg>
<svg style="left:1179.6px;top:377.9px;" width="46" height="53" viewBox="0 0 46 53"><path d="M22.6 0 L45.2 13.2 L45.2 19 C45.2 33 35.5 45 22.6 51.9 C9.7 45 0 33 0 19 L0 13.2 Z" fill="#2d6cf4"/><path d="M22.6 5.4 L40.3 15.8 L40.3 20 C40.3 31 32 41 22.6 46.6 C13.2 41 4.9 31 4.9 20 L4.9 15.8 Z" fill="#fff"/><path d="M9 18.2 L18.8 12.4 L22.8 18.9 L26.9 12.4 L36.5 18.2 L36.5 20.5 C36.5 29.5 30.5 37 22.8 41.7 C15 37 9 29.5 9 20.5 Z" fill="#2d6cf4"/><path d="M22.8 19.2 L27.3 26.9 L22.8 34 L18.2 26.9 Z" fill="#fff"/></svg>
<div class="a" style="left:1045px;top:498px;width:316px;height:1px;background:#f2f2f2;"></div>
<svg style="left:1042.8px;top:745.7px;" width="320" height="85" viewBox="0 0 320 85"><rect x="0" y="0" width="319.6" height="84.3" fill="none" stroke="#1e8cf5" stroke-width="1.5" stroke-dasharray="3 1"/></svg>
<div class="a" style="left:1038.8px;top:741.7px;width:8.0px;height:8.0px;background:#1e8cf5;"></div>
<div class="a" style="left:1358.4px;top:741.7px;width:8.0px;height:8.0px;background:#1e8cf5;"></div>
<div class="a" style="left:1038.8px;top:826px;width:8.0px;height:8px;background:#1e8cf5;"></div>
<div class="a" style="left:1358.4px;top:826px;width:8.0px;height:8px;background:#1e8cf5;"></div>
<div class="a" style="left:1195px;top:738.7px;width:14px;height:14px;border-radius:50%;background:#1e8cf5"></div>
<div class="a" style="left:1195px;top:823px;width:14px;height:14px;border-radius:50%;background:#1e8cf5"></div>
<div class="a" style="left:1035.8px;top:781px;width:14px;height:14px;border-radius:50%;background:#1e8cf5"></div>
<div class="a" style="left:1354px;top:781px;width:14px;height:14px;border-radius:50%;background:#1e8cf5"></div>
<svg style="left:1024px;top:781px;" width="12" height="14" viewBox="0 0 12 14"><path d="M0 7 L7 1 L7 13 Z" fill="#1e8cf5"/></svg>
<svg style="left:1371px;top:781px;" width="12" height="14" viewBox="0 0 12 14"><path d="M12 7 L5 1 L5 13 Z" fill="#1e8cf5"/></svg>
<div class="a" style="left:1042.3px;top:870.5px;width:319.70000000000005px;height:37.799999999999955px;background:#256bfc;border-radius:2px"></div>
<svg style="left:1137px;top:451px;" width="18" height="19" viewBox="0 0 18 19"><g fill="none" stroke="#1a1a1a" stroke-width="1.9" stroke-linecap="square"><path d="M6 1 L2 3 M0.5 5 L8 5 M4 2 L4 18 M4 7 L0.5 12 M4 8 L7.5 10"/><path d="M13 1 L9 5 M11 3 L16 3 L11 8 M14 8 L9 12 M12 10 L17 10 L9 18"/></g></svg>
<svg style="left:1157px;top:451px;" width="18" height="19" viewBox="0 0 18 19"><g fill="none" stroke="#1a1a1a" stroke-width="1.9" stroke-linecap="square"><path d="M1 3 L8 3 M0 7 L9 7 M5 8 L1 15 L8 14 M7 11 L8 14"/><path d="M10 5 L17 5 L16 17 L14 16 M13 1 L13 7 C13 12 11 15 9 17"/></g></svg>
<div class="ui" style="left:1180.5px;top:451.71px;font-size:17.5px;color:#1a1a1a;font-weight:bold;">Guard</div>
<svg style="left:1236.2px;top:451px;" width="18" height="19" viewBox="0 0 18 19"><g fill="none" stroke="#1a1a1a" stroke-width="1.9" stroke-linecap="square"><path d="M3 2 L15 2 M0.5 7 L17.5 7 M9 7 L9 17 L7 16 M5 10 L2 15 M13 10 L16 15"/></g></svg>
<svg style="left:1256px;top:451px;" width="18" height="19" viewBox="0 0 18 19"><g fill="none" stroke="#1a1a1a" stroke-width="1.9" stroke-linecap="square"><path d="M4 1 L1 8 M3 5 L3 18"/><path d="M6 3 L12 3 M8 3 C8 8 7 13 6 15 M8 7 L11 7 L10 12 M9 11 L7 13"/><path d="M14 3 L14 13 M17 1 L17 17 L15 16"/></g></svg>
<svg style="left:1190px;top:882.6px;" width="12" height="13" viewBox="0 0 12 13"><g fill="none" stroke="#ffffff" stroke-width="1.25" stroke-linecap="square"><path d="M1 1 L4.5 1 L1.8 4.2 M3.2 2.8 L4.5 3.8 M7.5 0.4 L11 3.8 M8.6 1.4 L10.8 1.2 M0.3 5.2 L11.7 5.2 M2.6 6.8 L9.4 6.8 L9.4 9 L2.6 9 Z M3.8 10 L4.6 11.3 M8.2 10 L7.4 11.3 M0.5 12 L11.5 12"/></g></svg>
<svg style="left:1203.1px;top:882.6px;" width="12" height="13" viewBox="0 0 12 13"><g fill="none" stroke="#ffffff" stroke-width="1.25" stroke-linecap="square"><path d="M1.5 0.7 L10.5 0.7 L10.5 4.6 M1.8 2.7 L10.5 2.7 M0.2 4.6 L11.8 4.6 M6 4.6 L6 12 L4.8 11.5 M1.3 6.3 L3.8 8 M0.4 11.2 L5.6 8.2 M10.6 6 L7.6 8.4 M6.8 8 L11.6 12"/></g></svg>
<div class="a" style="left:1439px;top:328.2px;width:359px;height:662.3px;background:#035d6f;"></div>
<svg style="left:1439px;top:328.2px;" width="359" height="662.3" viewBox="0 0 359 662.3"><rect x="0.6" y="0.6" width="357.8" height="661.1" fill="none" stroke="#72d2e4" stroke-width="1.2" stroke-dasharray="2.5 1"/></svg>
<div class="a" style="left:1591.2px;top:377px;width:55.9px;height:55.9px;background:#0f7386;color:#4e9cac;font-size:8.5px;letter-spacing:0.3px;display:flex;align-items:center;justify-content:center;white-space:nowrap;overflow:hidden">app_logo</div>
<svg style="left:1591.2px;top:377px;" width="55.899999999999864" height="55.89999999999998" viewBox="0 0 55.899999999999864 55.89999999999998"><rect x="0.5" y="0.5" width="54.9" height="54.9" fill="none" stroke="#72d2e4" stroke-width="1.1" stroke-dasharray="2.5 1"/></svg>
<div class="a" style="left:1552px;top:447.3px;width:140.0px;height:27.1px;background:#0f7386;color:#4e9cac;font-size:10.5px;letter-spacing:0.3px;display:flex;align-items:center;justify-content:center;white-space:nowrap;overflow:hidden">app_name</div>
<svg style="left:1552px;top:447.3px;" width="140" height="27.099999999999966" viewBox="0 0 140 27.099999999999966"><rect x="0.5" y="0.5" width="139.0" height="26.1" fill="none" stroke="#72d2e4" stroke-width="1.1" stroke-dasharray="2.5 1"/></svg>
<div class="a" style="left:1458.2px;top:498.5px;width:321.6px;height:42.1px;background:#0f7386;color:#4e9cac;font-size:10.5px;letter-spacing:0.3px;display:flex;align-items:center;justify-content:center;white-space:nowrap;overflow:hidden">login_method_tab</div>
<svg style="left:1458.2px;top:498.5px;" width="321.5999999999999" height="42.10000000000002" viewBox="0 0 321.5999999999999 42.10000000000002"><rect x="0.5" y="0.5" width="320.6" height="41.1" fill="none" stroke="#72d2e4" stroke-width="1.1" stroke-dasharray="2.5 1"/></svg>
<div class="a" style="left:1458.2px;top:553.2px;width:321.6px;height:49.8px;background:#22879b;color:#55a5b5;font-size:10.5px;letter-spacing:0.3px;display:flex;align-items:center;justify-content:center;white-space:nowrap;overflow:hidden">account</div>
<svg style="left:1458.2px;top:553.2px;" width="321.5999999999999" height="49.799999999999955" viewBox="0 0 321.5999999999999 49.799999999999955"><rect x="0.5" y="0.5" width="320.6" height="48.8" fill="none" stroke="#72d2e4" stroke-width="1.1" stroke-dasharray="2.5 1"/></svg>
<div class="a" style="left:1458.2px;top:603px;width:321.6px;height:35.0px;background:#22879b;color:#55a5b5;font-size:10.5px;letter-spacing:0.3px;display:flex;align-items:center;justify-content:center;white-space:nowrap;overflow:hidden">password</div>
<svg style="left:1458.2px;top:603px;" width="321.5999999999999" height="35" viewBox="0 0 321.5999999999999 35"><rect x="0.5" y="0.5" width="320.6" height="34.0" fill="none" stroke="#72d2e4" stroke-width="1.1" stroke-dasharray="2.5 1"/></svg>
<div class="a" style="left:1458.2px;top:649.6px;width:321.6px;height:50.0px;background:#22879b;color:#55a5b5;font-size:10.5px;letter-spacing:0.3px;display:flex;align-items:center;justify-content:center;white-space:nowrap;overflow:hidden">phone_number</div>
<svg style="left:1458.2px;top:649.6px;" width="321.5999999999999" height="50.0" viewBox="0 0 321.5999999999999 50.0"><rect x="0.5" y="0.5" width="320.6" height="49.0" fill="none" stroke="#72d2e4" stroke-width="1.1" stroke-dasharray="2.5 1"/></svg>
<div class="a" style="left:1458.2px;top:699.6px;width:247.3px;height:34.0px;background:#22879b;color:#55a5b5;font-size:10.5px;letter-spacing:0.3px;display:flex;align-items:center;justify-content:center;white-space:nowrap;overflow:hidden">phone_verify_code</div>
<svg style="left:1458.2px;top:699.6px;" width="247.29999999999995" height="34.0" viewBox="0 0 247.29999999999995 34.0"><rect x="0.5" y="0.5" width="246.3" height="33.0" fill="none" stroke="#72d2e4" stroke-width="1.1" stroke-dasharray="2.5 1"/></svg>
<div class="a" style="left:1708px;top:699.6px;width:71.8px;height:34.0px;background:#22879b;color:#55a5b5;font-size:4.5px;letter-spacing:0.3px;display:flex;align-items:center;justify-content:center;white-space:nowrap;overflow:hidden">get_phone_verify_code</div>
<svg style="left:1708px;top:699.6px;" width="71.79999999999995" height="34.0" viewBox="0 0 71.79999999999995 34.0"><rect x="0.5" y="0.5" width="70.8" height="33.0" fill="none" stroke="#72d2e4" stroke-width="1.1" stroke-dasharray="2.5 1"/></svg>
<div class="a" style="left:1458.2px;top:745.9px;width:321.6px;height:49.6px;background:#3b9bb1;color:#6ab5c5;font-size:10.5px;letter-spacing:0.3px;display:flex;align-items:center;justify-content:center;white-space:nowrap;overflow:hidden">email</div>
<svg style="left:1458.2px;top:745.9px;" width="321.5999999999999" height="49.60000000000002" viewBox="0 0 321.5999999999999 49.60000000000002"><rect x="0.5" y="0.5" width="320.6" height="48.6" fill="none" stroke="#72d2e4" stroke-width="1.1" stroke-dasharray="2.5 1"/></svg>
<div class="a" style="left:1458.2px;top:795.5px;width:250.0px;height:34.0px;background:#3b9bb1;color:#6ab5c5;font-size:10.5px;letter-spacing:0.3px;display:flex;align-items:center;justify-content:center;white-space:nowrap;overflow:hidden">email_verify_code</div>
<svg style="left:1458.2px;top:795.5px;" width="250.0" height="34.0" viewBox="0 0 250.0 34.0"><rect x="0.5" y="0.5" width="249.0" height="33.0" fill="none" stroke="#72d2e4" stroke-width="1.1" stroke-dasharray="2.5 1"/></svg>
<div class="a" style="left:1708.2px;top:795.5px;width:71.6px;height:34.0px;background:#3b9bb1;color:#6ab5c5;font-size:4.5px;letter-spacing:0.3px;display:flex;align-items:center;justify-content:center;white-space:nowrap;overflow:hidden">get_email_verify_code</div>
<svg style="left:1708.2px;top:795.5px;" width="71.59999999999991" height="34.0" viewBox="0 0 71.59999999999991 34.0"><rect x="0.5" y="0.5" width="70.6" height="33.0" fill="none" stroke="#72d2e4" stroke-width="1.1" stroke-dasharray="2.5 1"/></svg>
<div class="a" style="left:1458.2px;top:835.5px;width:321.6px;height:16.5px;background:#0f7386;color:#4e9cac;font-size:10.5px;letter-spacing:0.3px;display:flex;align-items:center;justify-content:center;white-space:nowrap;overflow:hidden">error_tip</div>
<svg style="left:1458.2px;top:835.5px;" width="321.5999999999999" height="16.5" viewBox="0 0 321.5999999999999 16.5"><rect x="0.5" y="0.5" width="320.6" height="15.5" fill="none" stroke="#72d2e4" stroke-width="1.1" stroke-dasharray="2.5 1"/></svg>
<div class="a" style="left:1458.2px;top:870.7px;width:321.6px;height:39.3px;background:#0f7386;color:#4e9cac;font-size:10.5px;letter-spacing:0.3px;display:flex;align-items:center;justify-content:center;white-space:nowrap;overflow:hidden">login_button</div>
<svg style="left:1458.2px;top:870.7px;" width="321.5999999999999" height="39.299999999999955" viewBox="0 0 321.5999999999999 39.299999999999955"><rect x="0.5" y="0.5" width="320.6" height="38.3" fill="none" stroke="#72d2e4" stroke-width="1.1" stroke-dasharray="2.5 1"/></svg>
<svg style="left:1458.6px;top:745.9px;" width="320" height="85" viewBox="0 0 320 85"><rect x="0" y="0" width="319.4" height="84" fill="none" stroke="#ffffff" stroke-width="1.6" stroke-dasharray="3 1"/></svg>
<div class="a" style="left:1455px;top:742px;width:8px;height:8px;background:#e8f6fa;"></div>
<div class="a" style="left:1773.5px;top:742px;width:8.0px;height:8px;background:#e8f6fa;"></div>
<div class="a" style="left:1455px;top:826px;width:8px;height:8px;background:#e8f6fa;"></div>
<div class="a" style="left:1773.5px;top:826px;width:8.0px;height:8px;background:#e8f6fa;"></div>
<div class="a" style="left:1609.0px;top:737.5px;width:17px;height:17px;border-radius:50%;background:#e8f6fa;border:2px solid #075566"></div>
<div class="a" style="left:1609.0px;top:821.5px;width:17px;height:17px;border-radius:50%;background:#e8f6fa;border:2px solid #075566"></div>
<div class="a" style="left:1450.5px;top:779.5px;width:17px;height:17px;border-radius:50%;background:#e8f6fa;border:2px solid #075566"></div>
<div class="a" style="left:1768.5px;top:779.5px;width:17px;height:17px;border-radius:50%;background:#e8f6fa;border:2px solid #075566"></div>
<svg style="left:1439px;top:781px;" width="12" height="14" viewBox="0 0 12 14"><path d="M0 7 L7 1 L7 13 Z" fill="#e8f6fa"/></svg>
<svg style="left:1786px;top:781px;" width="12" height="14" viewBox="0 0 12 14"><path d="M12 7 L5 1 L5 13 Z" fill="#e8f6fa"/></svg>
<svg style="left:1385px;top:995px;" width="25" height="25" viewBox="0 0 25 25"><path d="M1 24 L24 1 M10 22 L22 10" stroke="#76797b" stroke-width="1.1"/></svg>
<div class="a" style="left:1774.5px;top:897px;width:33px;height:35px;background:#2b2b2b;border:1px solid #45484a;border-radius:4px"></div>
<svg style="left:1780px;top:903px;" width="22" height="22" viewBox="0 0 22 22"><path d="M6.5 19.5 L2.2 13.6 C1.3 12.3 2.8 11 4 12 L6.3 14.2 L6.3 4.2 C6.3 2.9 8.3 2.9 8.3 4.2 L8.3 10.5 L8.3 2.4 C8.3 1.1 10.3 1.1 10.3 2.4 L10.3 10.5 L10.3 3 C10.3 1.7 12.3 1.7 12.3 3 L12.3 10.5 L12.3 4.6 C12.3 3.3 14.3 3.3 14.3 4.6 L14.3 14.5 C14.3 17.5 13 19.5 11 20.2 Z" fill="#d0d0d0"/><path d="M8.3 7 L8.3 10.5 M10.3 6 L10.3 10.5 M12.3 7 L12.3 10.5" stroke="#2b2b2b" stroke-width="0.6"/></svg>
<div class="a" style="left:1774.5px;top:938.6px;width:33px;height:129.4px;background:#2b2b2b;border:1px solid #45484a;border-radius:4px"></div>
<svg style="left:1783px;top:949px;" width="15" height="15" viewBox="0 0 15 15"><path d="M7.5 1 L7.5 14 M1 7.5 L14 7.5" stroke="#d0d0d0" stroke-width="2"/></svg>
<svg style="left:1783px;top:981px;" width="15" height="15" viewBox="0 0 15 15"><path d="M1 7.5 L14 7.5" stroke="#d0d0d0" stroke-width="2"/></svg>
<div class="ui" style="left:1782px;top:1013px;font-size:12px;color:#d0d0d0;font-weight:bold;">1:1</div>
<svg style="left:1782px;top:1043px;" width="18" height="16" viewBox="0 0 18 16"><rect x="1" y="0.8" width="15.5" height="13" fill="none" stroke="#d0d0d0" stroke-width="1.5"/><path d="M4.2 6.3 L4.2 4 L6.5 4 M13.3 8.3 L13.3 10.6 L11 10.6" stroke="#d0d0d0" stroke-width="1.3" fill="none"/></svg>
<div class="a" style="left:65px;top:1093.2px;width:1789px;height:1.0px;background:#3d3f41;"></div>
<div class="a" style="left:65px;top:1094.2px;width:1789px;height:26.799999999999955px;background:#313335;"></div>
<div class="ui" style="left:157.5px;top:1100.72px;font-size:15.7px;color:#bbbbbb;font-weight:normal;">androidx.constraintlayout.widget.ConstraintLayout</div>
<svg style="left:519px;top:1103.5px;" width="8" height="12" viewBox="0 0 8 12"><path d="M1.5 1.5 L6 6 L1.5 10.5" fill="none" stroke="#6a6a6a" stroke-width="1.3"/></svg>
<div class="ui" style="left:534.6px;top:1100.72px;font-size:15.7px;color:#bbbbbb;font-weight:normal;">cn.authing.guard.LoginContainer</div>
<div class="a" style="left:40px;top:1121px;width:1840px;height:29px;background:#3c3f41;"></div>
<svg style="left:78px;top:1127px;" width="14" height="14" viewBox="0 0 14 14"><path d="M1 1 L12 7 L1 13 Z" fill="#afb1b3"/><circle cx="11" cy="13" r="2.3" fill="#3c74c7" stroke="#3c3f41"/></svg>
<div class="ui" style="left:97px;top:1126.92px;font-size:13.6px;color:#bbbbbb;font-weight:normal;">Run</div>
<svg style="left:146px;top:1128px;" width="13" height="12" viewBox="0 0 13 12"><path d="M0 1 L2 1 M4 1 L13 1 M0 5.5 L2 5.5 M4 5.5 L13 5.5 M0 10 L2 10 M4 10 L13 10" stroke="#afb1b3" stroke-width="1.8"/></svg>
<div class="ui" style="left:164px;top:1126.92px;font-size:13.6px;color:#bbbbbb;font-weight:normal;">TODO</div>
<svg style="left:228px;top:1127px;" width="14" height="14" viewBox="0 0 14 14"><circle cx="7" cy="7" r="6.5" fill="#afb1b3"/><rect x="6" y="3" width="2" height="5.5" fill="#3c3f41"/><rect x="6" y="9.5" width="2" height="2" fill="#3c3f41"/></svg>
<div class="ui" style="left:247px;top:1126.87px;font-size:13.7px;color:#bbbbbb;font-weight:normal;">Problems</div>
<svg style="left:331px;top:1127px;" width="15" height="14" viewBox="0 0 15 14"><rect x="0" y="0" width="15" height="13" fill="#afb1b3"/><path d="M3 3 L6 6 L3 9" stroke="#3c3f41" stroke-width="1.5" fill="none"/><path d="M7 10 L11 10" stroke="#3c3f41" stroke-width="1.5"/></svg>
<div class="ui" style="left:352px;top:1126.77px;font-size:13.9px;color:#bbbbbb;font-weight:normal;">Terminal</div>
<svg style="left:430px;top:1129px;" width="14" height="11" viewBox="0 0 14 11"><path d="M0 1 L13 1 M0 5 L9 5 M0 9 L11 9" stroke="#afb1b3" stroke-width="1.8"/></svg>
<div class="ui" style="left:450px;top:1126.82px;font-size:13.8px;color:#bbbbbb;font-weight:normal;">Logcat</div>
<svg style="left:517px;top:1126px;" width="16" height="16" viewBox="0 0 16 16"><path d="M1 5 L6 1 L8 2.5 L6 5 L14 13 L12.5 14.5 L4.5 6.5 L2.5 8 Z" fill="#afb1b3"/></svg>
<div class="ui" style="left:538px;top:1126.87px;font-size:13.7px;color:#bbbbbb;font-weight:normal;">Build</div>
<svg style="left:591px;top:1128px;" width="17" height="12" viewBox="0 0 17 12"><path d="M2 12 A6.5 6.5 0 0 1 15 12" fill="none" stroke="#afb1b3" stroke-width="2.2"/><path d="M8 11 L11 5" stroke="#afb1b3" stroke-width="1.8"/></svg>
<div class="ui" style="left:612px;top:1126.77px;font-size:13.9px;color:#bbbbbb;font-weight:normal;">Profiler</div>
<svg style="left:686px;top:1126px;" width="14" height="17" viewBox="0 0 14 17"><path d="M3 4 L11 4 L11 14 L3 14 Z M1 7 L13 7 M1 11 L13 11 M5 1 L5 4 M9 1 L9 4 M4 16 L10 16" stroke="#afb1b3" stroke-width="1.7" fill="#afb1b3"/></svg>
<div class="ui" style="left:705px;top:1126.77px;font-size:13.9px;color:#bbbbbb;font-weight:normal;">App Inspection</div>
<svg style="left:1604px;top:1126px;" width="17" height="17" viewBox="0 0 17 17"><circle cx="8.5" cy="8.5" r="8.3" fill="#299c47"/></svg>
<div class="ui" style="left:1609.5px;top:1129.03px;font-size:11.5px;color:#ffffff;font-weight:bold;">2</div>
<div class="ui" style="left:1625px;top:1126.92px;font-size:13.6px;color:#bbbbbb;font-weight:normal;">Event Log</div>
<svg style="left:1715px;top:1125px;" width="17" height="17" viewBox="0 0 17 17"><path d="M3 1 L14 1 M1 3 L1 13 L4 13 M4 4 L12 4 L12 7" stroke="#afb1b3" stroke-width="1.4" fill="none"/><circle cx="10" cy="10.5" r="3.3" fill="none" stroke="#afb1b3" stroke-width="1.4"/><path d="M12.5 13 L15.5 16" stroke="#afb1b3" stroke-width="1.6"/></svg>
<div class="ui" style="left:1736px;top:1126.77px;font-size:13.9px;color:#bbbbbb;font-weight:normal;">Layout Inspector</div>
<div class="a" style="left:40px;top:1150px;width:1840px;height:40px;background:#3c3f41;"></div>
<svg style="left:47px;top:1160px;" width="15" height="15" viewBox="0 0 15 15"><rect x="3" y="1" width="11" height="10" fill="none" stroke="#afb1b3" stroke-width="1.3"/><path d="M1 3 L1 14 L12 14" fill="none" stroke="#afb1b3" stroke-width="1.3"/></svg>
<div class="ui" style="left:78.3px;top:1161.27px;font-size:13.8px;color:#bbbbbb;font-weight:normal;">Launch succeeded (a minute ago)</div>
<div class="ui" style="left:1344.8px;top:1161.27px;font-size:13.8px;color:#bbbbbb;font-weight:normal;">126:5 (664 chars, 14 line breaks)</div>
<div class="ui" style="left:1562px;top:1161.27px;font-size:13.8px;color:#bbbbbb;font-weight:normal;">LF</div>
<div class="ui" style="left:1591.8px;top:1161.22px;font-size:13.9px;color:#7d7f81;font-weight:normal;">UTF-8</div>
<div class="ui" style="left:1646px;top:1161.22px;font-size:13.9px;color:#bbbbbb;font-weight:normal;">4 spaces</div>
<svg style="left:1714.5px;top:1159.5px;" width="16" height="16" viewBox="0 0 16 16"><path d="M1.6 7.6 L1.6 4.2 A3.1 3.1 0 0 1 7.8 4.2 L7.8 6.5" fill="none" stroke="#afb1b3" stroke-width="1.7"/><rect x="4.2" y="7.3" width="10.3" height="7.2" fill="#afb1b3"/></svg>
<svg style="left:1744px;top:1159px;" width="18" height="18" viewBox="0 0 18 18"><circle cx="9" cy="9" r="8.5" fill="#afb1b3"/><circle cx="6.3" cy="7" r="1.3" fill="#3c3f41"/><circle cx="11.7" cy="7" r="1.3" fill="#3c3f41"/><path d="M5 11 A4.5 4 0 0 0 13 11" stroke="#3c3f41" stroke-width="1.4" fill="none"/></svg>
<svg style="left:1773px;top:1159px;" width="18" height="18" viewBox="0 0 18 18"><circle cx="9" cy="9" r="8.5" fill="#afb1b3"/><circle cx="6.3" cy="7" r="1.3" fill="#3c3f41"/><circle cx="11.7" cy="7" r="1.3" fill="#3c3f41"/><path d="M5 14 A4.5 4 0 0 1 13 14" stroke="#3c3f41" stroke-width="1.4" fill="none"/></svg>
<div class="a" style="left:1798px;top:1158px;width:82px;height:19px;background:#2b2d2f;border-radius:4px 0 0 4px"></div>
<div class="ui" style="left:1803.6px;top:1161.12px;font-size:14.1px;color:#d0d0d0;font-weight:bold;">Darcula</div>
<svg style="left:1860px;top:1159px;" width="18" height="18" viewBox="0 0 18 18"><circle cx="9" cy="9" r="8.5" fill="#2f6ea9"/></svg>
</body></html>
